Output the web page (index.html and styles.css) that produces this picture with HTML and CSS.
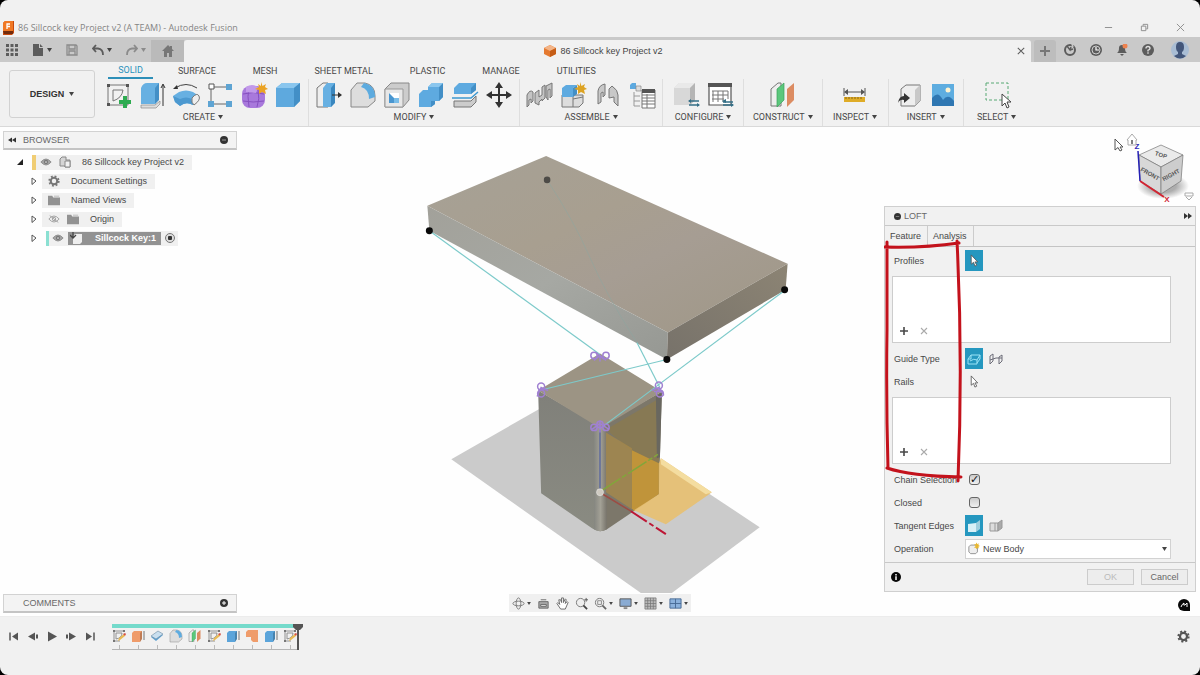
FILE: index.html
```html
<!DOCTYPE html>
<html lang="en">
<head>
<meta charset="utf-8">
<title>86 Sillcock key Project v2 (A TEAM) - Autodesk Fusion</title>
<link rel="stylesheet" href="styles.css">
</head>
<body>
<svg class="sprite" aria-hidden="true">
  <defs>
    <linearGradient id="gTop" x1="0" x2="1" y1="0" y2="1"><stop offset="0" stop-color="#a6a196"/><stop offset="0.4" stop-color="#a89f90"/><stop offset="0.6" stop-color="#a69d93"/><stop offset="1" stop-color="#9f9786"/></linearGradient>
    <linearGradient id="gSide" x1="0" x2="1" y1="0" y2="1"><stop offset="0" stop-color="#a2a19a"/><stop offset="0.5" stop-color="#a6a8a3"/><stop offset="1" stop-color="#969893"/></linearGradient>
    <linearGradient id="gEnd" x1="0" x2="1" y1="1" y2="0"><stop offset="0" stop-color="#77726a"/><stop offset="1" stop-color="#8c8474"/></linearGradient>
    <linearGradient id="gBoxL" x1="0" x2="0" y1="0" y2="1"><stop offset="0" stop-color="#80807a"/><stop offset="1" stop-color="#8a8b82"/></linearGradient>
    <linearGradient id="gRound" x1="0" x2="1" y1="0" y2="0"><stop offset="0" stop-color="#858680"/><stop offset="0.5" stop-color="#a3a196"/><stop offset="1" stop-color="#77736a"/></linearGradient>
    <radialGradient id="gShade"><stop offset="0.5" stop-color="#777" stop-opacity="0.6"/><stop offset="1" stop-color="#777" stop-opacity="0"/></radialGradient>

    <symbol id="caret" viewBox="0 0 5 4"><path d="M0 0H5L2.500 4Z" fill="currentColor"/></symbol>
    <symbol id="cube" viewBox="0 0 28 28"><path d="M2 7 8 2H26V20L20 26H2Z" fill="#5ea9de"/><path d="M2 7 8 2H26L20 7Z" fill="#8ac6ee"/><path d="M20 7 26 2V20L20 26Z" fill="#438fc6"/></symbol>
    <symbol id="sketch" viewBox="0 0 28 28"><g fill="none" stroke="#777"><path d="M4 4H24V24H4Z"/><path d="M9 9H19Q18 17 9 20Z"/></g><path d="M3 3h3v3H3zM22 3h3v3h-3zM3 22h3v3H3z" fill="#555"/><path d="M19 15h4v4h4v4h-4v4h-4v-4h-4v-4h4z" fill="#2eab51"/></symbol>
    <symbol id="extrude" viewBox="0 0 28 28"><path d="M3 24H17L22 20V23L18 27H3Z" fill="#ddd" stroke="#888" stroke-width=".7"/><path d="M3 7Q5 2 9 2H21V18L17 23H3Z" fill="#67b0e2"/><path d="M17 7 21 2V19L17 23Z" fill="#438fc6"/><path d="M25 25V4M23 7l2-4 2 4" stroke="#333" fill="none"/></symbol>
    <symbol id="revolve" viewBox="0 0 28 28"><path d="M3 7Q14 0 25 7" fill="none" stroke="#444"/><path d="M1 8 5 4 6 8Z" fill="#333"/><path d="M1 15 7 11Q14 8 21 11L27 15 21 24Q14 20 8 25L3 21Z" fill="#67b0e2"/><path d="M1 15 8 18Q14 15 20 18L21 24Q14 20 8 25L3 21Z" fill="#4c99d0"/><path d="M20 17Q25 11 27 15T22 24Q19 22 20 17Z" fill="#eee" stroke="#777"/></symbol>
    <symbol id="pattern" viewBox="0 0 28 28"><path d="M6 6H22M5 8V22M8 23H20" stroke="#666" fill="none"/><path d="M3 3h5v5H3z" fill="#fff" stroke="#555"/><path d="M20 3h6v6h-6zM2 20h6v6H2zM20 20h6v6h-6z" fill="#5ea4d3"/></symbol>
    <symbol id="form" viewBox="0 0 28 28"><rect x="2" y="5" width="23" height="22" rx="8" fill="#a879dc"/><path d="M9 6Q7 15 9 26M18 9Q20 18 17 26M3 13Q13 10 24 13M3 20Q13 22 24 20" stroke="#8650bf" fill="none"/><path d="M6 6Q12 2 18 6L16 12 6 11Z" fill="#c29aea"/><path d="M21 1 22.500 5 26 3 25 6 28 8 25 9 26 13 22 11 19 13 19 9 15 8 19 6 18 3 21 5Z" fill="#eba324"/></symbol>
    <symbol id="presspull" viewBox="0 0 28 28"><path d="M2 7 8 2H13V26H2Z" fill="#eee" stroke="#777"/><path d="M8 7 12 2H20V21L16 26H8Z" fill="#67b0e2"/><path d="M16 7 20 2V22L16 26Z" fill="#3a87bf"/><path d="M17 14H26" stroke="#333"/><path d="m23 11 4 3-4 3Z" fill="#333"/></symbol>
    <symbol id="fillet" viewBox="0 0 28 28"><path d="M2 9 8 2H16Q26 4 26 15V20L19 26H2Z" fill="#ddd" stroke="#888"/><path d="M12 6 15 2Q26 4 26 16L20 18Q20 8 12 6Z" fill="#5dabdf"/></symbol>
    <symbol id="shell" viewBox="0 0 28 28"><path d="M2 8 8 2H26V19L20 26H2Z" fill="#ccc" stroke="#888"/><path d="M2 8H20V26H2Z" fill="#e7e7e7" stroke="#999"/><path d="M6 12h10v10H6z" fill="#fff"/><path d="M6 12l5 5v5H6z" fill="#4996d0"/><path d="M11 17h5v5h-5z" fill="#78bce8"/></symbol>
    <symbol id="combine" viewBox="0 0 28 28"><path d="M2 13 6 9H11V6L15 2H26V16L22 20H18V23L14 26H2Z" fill="#5eaae0"/><path d="M22 6 26 2V16L22 20H18V23L14 26V20H22Z" fill="#438fc6"/><path d="M11 6 15 2H26L22 6Z" fill="#8ac6ee"/></symbol>
    <symbol id="split" viewBox="0 0 28 28"><path d="M3 7 8 2H25V9L20 13H3Z" fill="#5eaae0"/><path d="M20 7 25 2V9L20 13Z" fill="#438fc6"/><path d="M3 20H20L25 15V21L20 26H3Z" fill="#ccc" stroke="#777"/><path d="M1 17H20L27 11" stroke="#3d98d0" fill="none" stroke-width="1.500"/></symbol>
    <symbol id="move" viewBox="0 0 28 28"><path d="M14 4V24M4 14H24" stroke="#333" stroke-width="2"/><path d="m14 1 4 6h-8zM14 27l4-6h-8zM1 14l6-4v8zM27 14l-6-4v8z" fill="#333"/></symbol>
    <symbol id="joint" viewBox="0 0 28 28"><g fill="#c4c4c4" stroke="#777"><path d="M1 26V14Q4 8 7 11V20L5 22V18L3 19V24Z"/><path d="M9 22V12L13 9V16L16 14V6L19 4V17L16 20V18L13 21V24Z"/><path d="M20 16V5L26 2V15L24 17V8L22 9V19Z"/></g></symbol>
    <symbol id="newcomp" viewBox="0 0 28 28"><path d="M2 14H23V22L19 26H2Z" fill="#ddd" stroke="#777"/><path d="M13 14V26M13 18 23 16" stroke="#777" fill="none"/><path d="M2 7 6 4H17L13 7V16H2Z" fill="#5eaae0"/><path d="M13 7 17 4V13L13 16Z" fill="#438fc6"/><path d="M20 1 21.500 5 25 3 24 6 27 8 24 9 25 13 21 11 18 13 18 9 14 8 18 6 17 3 20 5Z" fill="#dda323"/></symbol>
    <symbol id="asbuilt" viewBox="0 0 28 28"><path d="M4 23V10Q5 4 11 3V14L9 16V11L7 12V21Z" fill="#c8c8c8" stroke="#777"/><path d="M15 17V8L18 5Q24 9 24 14V25L20 21V16Z" fill="#c8c8c8" stroke="#777"/></symbol>
    <symbol id="bom" viewBox="0 0 28 28"><path d="M2 4 4 2H8V8H2Z" fill="#5eaae0"/><path d="M8 5h5v5H8z" fill="#ddd" stroke="#888" stroke-width=".7"/><path d="M6 11V25M6 15h6M6 20h6M6 25h6" stroke="#999" fill="none"/><path d="M14 9h13v18H14zM14 14h13M14 17h13M14 20h13M14 23h13M19 13v14" stroke="#777" fill="#fff"/><path d="M14 8h13v4H14z" fill="#555"/></symbol>
    <symbol id="config" viewBox="0 0 28 28"><path d="M2 7 7 2H23V19L18 24H2Z" fill="#d8d8d8"/><path d="M2 7 7 2H23L18 7Z" fill="#e9e9e9"/><path d="M18 7 23 2V19L18 24Z" fill="#b5b5b5"/><path d="M17 20H27M17 24H27" stroke="#356f86" stroke-width="1.300"/><path d="m16 20 3-2v4zM28 24l-3-2v4z" fill="#356f86"/></symbol>
    <symbol id="cfgtable" viewBox="0 0 28 28"><path d="M3 4h22v20H3z" fill="#fff" stroke="#555" stroke-width="1.200"/><path d="M2 2h24v4H2z" fill="#555"/><path d="M6 10h16M6 14h16M6 18h12M7 10v11M12 10v11M17 10v11M22 10v8" stroke="#777" fill="none"/><path d="M17 21H27M17 24H27" stroke="#356f86" stroke-width="1.300"/><path d="m16 20 4-2v4zM28 24l-3-2v4z" fill="#356f86"/></symbol>
    <symbol id="planes" viewBox="0 0 28 28"><path d="M2 8 9 2H12V25H2Z" fill="#eee" stroke="#777"/><path d="M8 8 15 2V19L8 26Z" fill="#5bc77c" stroke="#39a15a" stroke-width=".7"/><path d="M18 8 25 2V19L18 26Z" fill="#dc8c62"/></symbol>
    <symbol id="measure" viewBox="0 0 28 28"><path d="M3 7v8M24 7v8M4 11h19" stroke="#555" fill="none"/><path d="m3 11 4-3v6zM24 11l-4-3v6z" fill="#555"/><path d="M3 16h21v5H3z" fill="#dfac27"/><path d="M5 16v2M8 16v2M11 16v2M14 16v2M17 16v2M20 16v2" stroke="#8a6614"/></symbol>
    <symbol id="insert" viewBox="0 0 28 28"><path d="M6 8 11 4H25V20L20 25H6Z" fill="#eee" stroke="#777"/><path d="M20 9 25 4V20L20 25Z" fill="#c8c8c8"/><path d="M3 22Q4 15 9 15V12L15 17 9 22V19Q5 18 3 22Z" fill="#333"/></symbol>
    <symbol id="image" viewBox="0 0 28 28"><path d="M3 3h22v22H3z" fill="#5eade0"/><path d="M3 17Q9 9 14 19 19 12 25 20V25H3Z" fill="#2f77b2"/><circle cx="19" cy="9" r="2.500" fill="#fff3d0"/></symbol>
    <symbol id="select" viewBox="0 0 28 28"><path d="M3 2h22v17H3z" fill="none" stroke="#58a975" stroke-dasharray="3 2"/><path d="M19 13V25l3-3 2 5 2-1-2-5h4z" fill="#fff" stroke="#444"/></symbol>
    <symbol id="cursor" viewBox="0 0 12 14"><path d="M3 1V11L5.500 9 7 13 9 12 7 8.500H10Z" fill="#fff" stroke="#555" stroke-width=".9"/></symbol>
    <symbol id="eye" viewBox="0 0 14 10"><path d="M1 5Q7-2 13 5 7 12 1 5Z" fill="#a4a4a4" stroke="#888"/><circle cx="7" cy="5" r="2.500" fill="#777"/><circle cx="7" cy="5" r="1" fill="#ddd"/></symbol>
    <symbol id="eyeoff" viewBox="0 0 14 10"><path d="M1 5Q7-2 13 5 7 12 1 5ZM2 1 12 9" fill="none" stroke="#999"/><circle cx="7" cy="5" r="2" fill="none" stroke="#999"/></symbol>
    <symbol id="gear" viewBox="0 0 14 14"><circle cx="7" cy="7" r="3.800" fill="none" stroke="currentColor" stroke-width="2.400"/><circle cx="7" cy="7" r="5.600" fill="none" stroke="currentColor" stroke-width="2" stroke-dasharray="2.200 2.200"/></symbol>
    <symbol id="folder" viewBox="0 0 14 12"><path d="M0 1H5L6 3H14V12H0Z" fill="#929292"/><path d="M7 1H13V2H7Z" fill="#aaa"/></symbol>
    <symbol id="plus" viewBox="0 0 10 10"><path d="M5 1V9M1 5H9" stroke="currentColor" stroke-width="1.600"/></symbol>
    <symbol id="cross" viewBox="0 0 10 10"><path d="M2 2 8 8M8 2 2 8" stroke="currentColor" stroke-width="1.100"/></symbol>
    <symbol id="tsketch" viewBox="0 0 14 14"><path d="M2 2H12M2 2V13M2 12H8M4 4h6q0 5-6 6z" fill="none" stroke="#888" stroke-width=".9"/><path d="M1 1h2v2H1zM11 1h2v2h-2zM1 11h2v2H1z" fill="#777"/><path d="m6 12 1-3 5-4 1 2-5 4z" fill="#e9bb54"/><path d="m11 5 2 2 1-2-1-1z" fill="#d65043"/></symbol>
    <symbol id="textrude" viewBox="0 0 14 14"><path d="M1 4 3 2H11V10L9 13H1Z" fill="currentColor"/><path d="M9 4 11 2V10L9 13Z" fill="#000" opacity=".2"/><path d="M13 2V11" stroke="#777"/></symbol>
  </defs>
</svg>

<div class="app">
  <header class="titlebar">
    <svg class="app-logo" viewBox="0 0 12 14"><path d="M1 2 3 0H12V12L10 14H1Z" fill="#c8480c"/><path d="M1 2 3 0H11V10H1Z" fill="#f07824"/><path d="M5 8V3H8M5 5.500H8" stroke="#fff" fill="none" stroke-width="1.300"/><path d="M1 10H11V13H2Z" fill="#722b0c"/></svg>
    <span class="title">86 Sillcock key Project v2 (A TEAM) - Autodesk Fusion</span>
    <div class="window-controls">
      <button aria-label="Minimize"><svg viewBox="0 0 10 10"><path d="M1 5H9" stroke="currentColor"/></svg></button>
      <button aria-label="Restore"><svg viewBox="0 0 10 10"><path d="M1.500 3.500h5v5h-5zM3.500 3V1.500h5v5H7" fill="none" stroke="currentColor"/></svg></button>
      <button aria-label="Close window"><svg viewBox="0 0 10 10"><path d="M1 1 9 9M9 1 1 9" stroke="currentColor"/></svg></button>
    </div>
  </header>

  <div class="quickbar">
    <div class="quick-left">
      <button aria-label="Data panel"><svg class="i12" viewBox="0 0 12 12"><path d="M0 0h3v3H0zM4.500 0h3v3h-3zM9 0h3v3H9zM0 4.500h3v3H0zM4.500 4.500h3v3h-3zM9 4.500h3v3H9zM0 9h3v3H0zM4.500 9h3v3h-3zM9 9h3v3H9z" fill="#5c5c5c"/></svg></button>
      <button aria-label="File"><svg class="i12" viewBox="0 0 12 12"><path d="M1 0H7V4H11V12H1ZM8 0 11 3H8Z" fill="#5c5c5c"/></svg><svg class="caret"><use href="#caret"/></svg></button>
      <button class="dim" aria-label="Save"><svg class="i12" viewBox="0 0 12 12"><path d="M1 1H10L11 2V11H1ZM3 1V5H9V1M3 11V7H9V11" fill="none" stroke="currentColor" stroke-width="1.300"/></svg></button>
      <button aria-label="Undo"><svg class="i12" viewBox="0 0 12 12"><path d="M4 1 1 4.500 4 8M1 4.500H6Q11 5 11 11" fill="none" stroke="currentColor" stroke-width="1.800"/></svg><svg class="caret"><use href="#caret"/></svg></button>
      <button class="dim" aria-label="Redo"><svg class="i12" viewBox="0 0 12 12"><path d="M8 1 11 4.500 8 8M11 4.500H6Q1 5 1 11" fill="none" stroke="currentColor" stroke-width="1.800"/></svg><svg class="caret"><use href="#caret"/></svg></button>
    </div>
    <button class="home-tab" aria-label="Home"><svg class="i12" viewBox="0 0 12 12"><path d="M0 6 6 0 8 2V1h2v3l2 2H10v6H7V8H5v4H2V6Z" fill="#777"/></svg></button>
    <div class="doc-tab">
      <span class="doc-name"><svg class="i12" viewBox="0 0 12 12"><path d="M0 3 6 0 12 3V9L6 12 0 9Z" fill="#e57a30"/><path d="M0 3 6 0 12 3 6 6Z" fill="#f3b487"/><path d="M6 6 12 3V9L6 12Z" fill="#c55d16"/></svg>86 Sillcock key Project v2</span>
      <button class="close-tab" aria-label="Close tab"><svg viewBox="0 0 10 10"><path d="M1 1 9 9M9 1 1 9" stroke="currentColor" stroke-width="1.300"/></svg></button>
    </div>
    <div class="quick-right">
      <button class="new-tab" aria-label="New tab"><svg class="i12" viewBox="0 0 12 12"><path d="M6 1V11M1 6H11" stroke="#777" stroke-width="2"/></svg></button>
      <button aria-label="Extensions"><svg class="i12" viewBox="0 0 12 12"><circle cx="6" cy="6" r="5" fill="none" stroke="currentColor" stroke-width="2"/><path d="M3 2 6 6 7 3M6 6 9 5" fill="none" stroke="currentColor" stroke-width="1.500"/><path d="M8 0 9 3" stroke="#c9c9c9" stroke-width="1.500"/></svg></button>
      <button aria-label="Job status"><svg class="i12" viewBox="0 0 12 12"><circle cx="6" cy="6" r="6" fill="currentColor"/><circle cx="6" cy="6" r="4" fill="none" stroke="#ccc"/><path d="M6 3V6H9" fill="none" stroke="#fff" stroke-width="1.200"/></svg></button>
      <button aria-label="Notifications"><svg class="i12" viewBox="0 0 12 12"><path d="M1 9Q3 8 3 4 3 1 6 1T9 4Q9 8 11 9ZM4 10H8L6 12Z" fill="currentColor"/><circle cx="9" cy="2" r="2.500" fill="#ed824f"/></svg></button>
      <button aria-label="Help"><svg class="i12" viewBox="0 0 12 12"><circle cx="6" cy="6" r="6" fill="currentColor"/><path d="M4 4.500Q4 2.500 6 2.500T8 4.500Q8 5.500 6 6.300V7.500M6 8.300V9.800" fill="none" stroke="#ddd" stroke-width="1.400"/></svg></button>
      <button class="avatar" aria-label="Account"><svg viewBox="0 0 18 18"><circle cx="9" cy="9" r="9" fill="#a9bdd4"/><path d="M9 1Q13 1 13 6 13 10 11 11V13L15 15Q9 20 3 15L7 13V11Q5 10 5 6 5 1 9 1Z" fill="#43567a"/></svg></button>
    </div>
  </div>

  <div class="ribbon">
    <button class="design">DESIGN <svg class="caret"><use href="#caret"/></svg></button>
    <div class="ribbon-main">
      <nav class="ribbon-tabs">
        <button class="active">SOLID</button><button>SURFACE</button><button>MESH</button><button>SHEET METAL</button><button>PLASTIC</button><button>MANAGE</button><button>UTILITIES</button>
      </nav>
      <div class="groups">
        <section class="group">
          <div class="tools"><button aria-label="Create sketch"><svg><use href="#sketch"/></svg></button><button aria-label="Extrude"><svg><use href="#extrude"/></svg></button><button aria-label="Revolve"><svg><use href="#revolve"/></svg></button><button aria-label="Pattern"><svg><use href="#pattern"/></svg></button><button aria-label="Create form"><svg><use href="#form"/></svg></button><button aria-label="Box"><svg><use href="#cube"/></svg></button></div>
          <button class="group-name">CREATE <svg class="caret"><use href="#caret"/></svg></button>
        </section>
        <section class="group">
          <div class="tools"><button aria-label="Press pull"><svg><use href="#presspull"/></svg></button><button aria-label="Fillet"><svg><use href="#fillet"/></svg></button><button aria-label="Shell"><svg><use href="#shell"/></svg></button><button aria-label="Combine"><svg><use href="#combine"/></svg></button><button aria-label="Split body"><svg><use href="#split"/></svg></button><button aria-label="Move"><svg><use href="#move"/></svg></button></div>
          <button class="group-name">MODIFY <svg class="caret"><use href="#caret"/></svg></button>
        </section>
        <section class="group">
          <div class="tools"><button aria-label="Joint"><svg><use href="#joint"/></svg></button><button aria-label="New component"><svg><use href="#newcomp"/></svg></button><button aria-label="As-built joint"><svg><use href="#asbuilt"/></svg></button><button aria-label="Bill of materials"><svg><use href="#bom"/></svg></button></div>
          <button class="group-name">ASSEMBLE <svg class="caret"><use href="#caret"/></svg></button>
        </section>
        <section class="group wide">
          <div class="tools"><button aria-label="Configure model"><svg><use href="#config"/></svg></button><button aria-label="Configuration table"><svg><use href="#cfgtable"/></svg></button></div>
          <button class="group-name">CONFIGURE <svg class="caret"><use href="#caret"/></svg></button>
        </section>
        <section class="group wide">
          <div class="tools"><button aria-label="Offset plane"><svg><use href="#planes"/></svg></button></div>
          <button class="group-name">CONSTRUCT <svg class="caret"><use href="#caret"/></svg></button>
        </section>
        <section class="group wide">
          <div class="tools"><button aria-label="Measure"><svg><use href="#measure"/></svg></button></div>
          <button class="group-name">INSPECT <svg class="caret"><use href="#caret"/></svg></button>
        </section>
        <section class="group">
          <div class="tools"><button aria-label="Insert derive"><svg><use href="#insert"/></svg></button><button aria-label="Canvas"><svg><use href="#image"/></svg></button></div>
          <button class="group-name">INSERT <svg class="caret"><use href="#caret"/></svg></button>
        </section>
        <section class="group">
          <div class="tools"><button aria-label="Select"><svg><use href="#select"/></svg></button></div>
          <button class="group-name">SELECT <svg class="caret"><use href="#caret"/></svg></button>
        </section>
      </div>
    </div>
  </div>

  <main class="viewport">
    <svg class="scene" viewBox="0 127 1200 490" role="img" aria-label="3D model">
      <path d="M451 460 540 409 600 422 760 528 672 594H641Z" fill="#cbcbcb"/>
      <path d="M546 156 788 264 668 333 427 206Z" fill="url(#gTop)"/>
      <path d="M427 206 668 333 667 360 429 231Z" fill="url(#gSide)"/>
      <path d="M668 333 788 264 786 290 667 360Z" fill="url(#gEnd)"/>
      <path d="M538 391 600 427V532Q596 532 592 529L541 494Z" fill="url(#gBoxL)"/>
      <path d="M600 427 662 392 659 495 607 530Q603 532 600 532Z" fill="#7c776a"/>
      <path d="M594 424 600 428 607 424V530Q600 534 594 530Z" fill="url(#gRound)"/>
      <path d="M538 391 600 354 662 392 607 425Q600 429 594 425Z" fill="#9c9484"/>
      <path d="M606 430 661 398 659 465 632 452Z" fill="#8c7a4c" opacity=".7"/>
      <path d="M606 433 632 449V510L606 493Z" fill="#a88a4a" opacity=".75"/>
      <path d="M632 451 659 464V495L634 512 632 509Z" fill="#c0943a"/>
      <path d="M659 464 661 459 712 493 708 496 666 525 634 511 659 495Z" fill="#e8c070" opacity=".9"/>
      <path d="M661 459 712 493 706 495 661 465Z" fill="#f4dda0"/>
      <path d="M656 397 662 393 660 458 657 459Z" fill="#69675f"/>
      <path d="M600 493V430" stroke="#5d6a9c" stroke-width="1.500"/>
      <path d="M602 491 658 455" stroke="#82a63a" stroke-width="1.500" stroke-dasharray="22 2 5 2"/>
      <path d="M603 495 631 512" stroke="#9c4c43" stroke-width="1.500"/>
      <path d="M631 512 666 535" stroke="#bd1635" stroke-width="2" stroke-dasharray="19 3 5 3"/>
      <circle cx="600" cy="493" r="3.500" fill="#cfcac1" stroke="#eee" stroke-width=".5"/>
      <g fill="none" stroke="#7dcaca" stroke-width="1.200"><path d="M429 231 600 355"/><path d="M637 343 660 388"/><path d="M667 360 543 390"/><path d="M786 290 603 427"/></g>
      <path d="M547 180Q575 223 590 258T637 343" fill="none" stroke="#8ba7a0" opacity=".5"/>
      <g fill="none" stroke="#a080d2" stroke-width="1.500">
        <circle cx="594" cy="356" r="3.200"/><circle cx="606" cy="356" r="3.200"/><path d="M594 361 600 356 606 361M600 356V362M596 353 604 360"/>
        <circle cx="541" cy="387" r="3.500"/><circle cx="541" cy="394" r="3.500"/><path d="M537 397 541 388 548 391M538 390H547"/>
        <circle cx="659" cy="386" r="3.500"/><circle cx="660" cy="394" r="3.500"/><path d="M652 391 659 388 664 396M654 392H663"/>
        <circle cx="594" cy="428" r="3.200"/><circle cx="600" cy="425" r="3.200"/><circle cx="606" cy="428" r="3.200"/><path d="M592 430 600 424 609 430M600 421V433"/>
      </g>
      <g fill="#090909"><circle cx="429" cy="231" r="3.500"/><circle cx="785" cy="290" r="3.500"/><circle cx="667" cy="360" r="3.500"/></g>
      <circle cx="547" cy="180" r="3.300" fill="#4d4b47"/>
    </svg>

    <aside class="left-column">
      <section class="browser">
        <h2 class="bar"><svg class="rewind" viewBox="0 0 10 6"><path d="M5 0V6L0 3ZM10 0V6L5 3Z" fill="#333"/></svg><span>BROWSER</span><button aria-label="Hide browser"><svg viewBox="0 0 8 8"><circle cx="4" cy="4" r="4" fill="#333"/><path d="M2 4H6" stroke="#999"/></svg></button></h2>
        <ul class="tree">
          <li class="root"><svg class="twist" viewBox="0 0 8 8"><path d="M7 1V7H1Z" fill="#222"/></svg><div class="node yellow"><svg class="eye"><use href="#eye"/></svg><svg class="i12" viewBox="0 0 12 12"><path d="M1 3 3 1H7V4H11V11H6V10H1Z" fill="#d5d5d5" stroke="#888"/><path d="M6 5H11V11H6Z" fill="#f2f2f2" stroke="#888"/></svg><span>86 Sillcock key Project v2</span></div></li>
          <li><svg class="twist" viewBox="0 0 8 8"><path d="M2 1 6 4 2 7.500Z" fill="none" stroke="#555"/></svg><div class="node"><svg class="i12 grey"><use href="#gear"/></svg><span>Document Settings</span></div></li>
          <li><svg class="twist" viewBox="0 0 8 8"><path d="M2 1 6 4 2 7.500Z" fill="none" stroke="#555"/></svg><div class="node"><svg class="i12"><use href="#folder"/></svg><span>Named Views</span></div></li>
          <li><svg class="twist" viewBox="0 0 8 8"><path d="M2 1 6 4 2 7.500Z" fill="none" stroke="#555"/></svg><div class="node"><svg class="eye"><use href="#eyeoff"/></svg><svg class="i12"><use href="#folder"/></svg><span>Origin</span></div></li>
          <li><svg class="twist" viewBox="0 0 8 8"><path d="M2 1 6 4 2 7.500Z" fill="none" stroke="#555"/></svg><div class="node teal"><svg class="eye"><use href="#eye"/></svg><span class="component"><svg class="i12" viewBox="0 0 12 12"><path d="M3 4 5 2H12V10L10 12H3Z" fill="#eee"/><path d="M3 0V6M0 3 3 6 6 3" stroke="#444" stroke-width="1.300" fill="none"/></svg><b>Sillcock Key:1</b></span><input type="radio" checked aria-label="Activate Sillcock Key:1"></div></li>
        </ul>
      </section>
      <h2 class="bar comments"><span>COMMENTS</span><button aria-label="Add comment"><svg viewBox="0 0 8 8"><circle cx="4" cy="4" r="4" fill="#333"/><path d="M2 4H6M4 2V6" stroke="#fff"/></svg></button></h2>
    </aside>

    <div class="right-column">
      <svg class="viewcube" viewBox="1106 127 90 79">
        <ellipse cx="1163" cy="186" rx="26" ry="13" fill="url(#gShade)"/>
        <path d="M1139 155 1161 145 1183 155 1161 167Z" fill="#eaeaea" stroke="#777" stroke-width=".7"/>
        <path d="M1139 155 1161 167V194L1140 181Z" fill="#d8d8d8" stroke="#777" stroke-width=".7"/>
        <path d="M1161 167 1183 155 1181 181 1161 194Z" fill="#cdcdcd" stroke="#777" stroke-width=".7"/>
        <path d="M1138 151 1140 181" stroke="#2520b5" stroke-width="1.500"/><path d="M1140 181 1164 197" stroke="#d22431" stroke-width="2"/>
        <g class="cube-text"><text x="1161" y="157" transform="rotate(17 1161 155)">TOP</text><text x="1150" y="176" transform="rotate(29 1150 174)">FRONT</text><text x="1171" y="177" transform="rotate(-29 1171 175)">RIGHT</text><text class="axis-z" x="1137" y="149">Z</text><text class="axis-x" x="1167" y="202">X</text></g>
        <path d="M1127 140 1132 134 1137 140H1136V145H1128V140Z" fill="#fff" stroke="#aaa"/><path d="M1132 140V144" stroke="#555" stroke-width="1.500"/>
        <path d="M1115 139V150L1118 147.500 1120 151 1122 150 1120 147H1123Z" fill="#fff" stroke="#555"/>
        <path d="M1185 193H1193V196H1185ZM1186 197 1189 200 1192 197" fill="none" stroke="#aaa"/>
      </svg>

      <form class="loft">
        <h2 class="loft-head"><svg class="dot" viewBox="0 0 8 8"><circle cx="4" cy="4" r="4" fill="#333"/><path d="M2 4H6" stroke="#888"/></svg><span>LOFT</span><svg class="forward" viewBox="0 0 8 6"><path d="M0 0V6L4 3ZM4 0V6L8 3Z" fill="#333"/></svg></h2>
        <div class="loft-tabs"><button type="button" class="current">Feature</button><button type="button">Analysis</button></div>
        <div class="loft-body">
          <div class="row"><span>Profiles</span><button type="button" class="toggle on" aria-label="Select profiles"><svg class="pointer"><use href="#cursor"/></svg></button></div>
          <div class="list"><button type="button" aria-label="Add profile"><svg><use href="#plus"/></svg></button><button type="button" class="faint" aria-label="Remove profile"><svg><use href="#cross"/></svg></button></div>
          <div class="row"><span>Guide Type</span><button type="button" class="toggle on" aria-label="Rails"><svg viewBox="0 0 14 14"><path d="M1 12V7L4 3H13V7L10 11M1 7H4V3M1 12H10V8Q7 6 3 9M10 8 13 3" fill="none" stroke="#9be4f7"/></svg></button><button type="button" class="toggle" aria-label="Centerline"><svg viewBox="0 0 14 14"><path d="M1 12V4L4 2V9ZM10 12V5L13 3V9ZM1 8Q7 5 13 6" fill="none" stroke="#6d6d78"/></svg></button></div>
          <div class="row"><span>Rails</span><button type="button" class="toggle" aria-label="Select rails"><svg class="pointer"><use href="#cursor"/></svg></button></div>
          <div class="list"><button type="button" aria-label="Add rail"><svg><use href="#plus"/></svg></button><button type="button" class="faint" aria-label="Remove rail"><svg><use href="#cross"/></svg></button></div>
          <div class="row"><label for="chain">Chain Selection</label><input id="chain" type="checkbox" checked></div>
          <div class="row"><label for="closed">Closed</label><input id="closed" type="checkbox"></div>
          <div class="row"><span>Tangent Edges</span><button type="button" class="toggle on" aria-label="Merge"><svg viewBox="0 0 14 14"><path d="M1 5 9 4V13H1Z" fill="#d9f0f7"/><path d="M9 4 13 1V10L9 13Z" fill="#9fcede"/></svg></button><button type="button" class="toggle" aria-label="Keep"><svg viewBox="0 0 14 14"><path d="M1 4H9V12H1Z" fill="#ddd" stroke="#999"/><path d="M9 4 13 1V9L9 12Z" fill="#aaa" stroke="#999"/><path d="M6 4V12" stroke="#999"/></svg></button></div>
          <div class="row"><label for="operation">Operation</label><div class="combo"><svg viewBox="0 0 14 14"><path d="M1 5 3 3H11V11L9 13H3L1 11Z" fill="#eee" stroke="#888"/><path d="m10 0 1 2 2-1-1 2 2 1-2 1 1 2-2-1-1 2-1-2-2 0 2-2-2-2h2z" fill="#e8b730"/></svg><select id="operation"><option>New Body</option></select><svg class="caret"><use href="#caret"/></svg></div></div>
        </div>
        <div class="loft-foot"><svg class="info" viewBox="0 0 10 10"><circle cx="5" cy="5" r="5" fill="#080808"/><path d="M5 2V3.500M5 4.300V8" stroke="#fff" stroke-width="1.500"/></svg><button type="button" disabled>OK</button><button type="button">Cancel</button></div>
        <svg class="markup" viewBox="884 206 80 280" fill="none" stroke="#c3121c" stroke-width="3" stroke-linecap="round" stroke-linejoin="round"><path d="M887 242V330Q886 400 888 468M885 247Q925 248 959 243M957 241Q963 360 958 481M887 468Q910 476 961 477"/></svg>
      </form>
      <button class="assistant" aria-label="Assistant"><svg viewBox="0 0 14 14"><path d="M7 1A6 6 0 1 0 7 13H13V7A6 6 0 0 0 7 1Z" fill="#090909"/><path d="M4 9Q5 6 7 5 6 8 8 7L10 5V9" fill="none" stroke="#fff"/></svg></button>
    </div>

    <div class="navbar">
      <button aria-label="Orbit"><svg viewBox="0 0 14 14"><ellipse cx="7" cy="7" rx="6" ry="2.500" fill="none" stroke="#777"/><ellipse cx="7" cy="7" rx="2.500" ry="6" fill="none" stroke="#777"/></svg><svg class="caret"><use href="#caret"/></svg></button>
      <button aria-label="Look at"><svg viewBox="0 0 14 14"><path d="M2 5H12V12H2Z" fill="#aaa" stroke="#666"/><path d="M4 3H10M4 8H10V10H4Z" fill="#eee" stroke="#666"/></svg></button>
      <button aria-label="Pan"><svg viewBox="0 0 14 14"><path d="M5 13 1 7 2 6 4 8 3 3H5L6 6 6 1H8V6L10 2 11 3 10 7 12 5 13 6 10 13Z" fill="#fff" stroke="#666"/></svg></button>
      <button aria-label="Zoom"><svg viewBox="0 0 14 14"><circle cx="6" cy="6" r="4.500" fill="#eee" stroke="#777"/><path d="M9 9 13 13" stroke="#444" stroke-width="2"/><path d="M12 1V5M10 3H14" stroke="#555"/></svg></button>
      <button aria-label="Fit"><svg viewBox="0 0 14 14"><circle cx="6" cy="6" r="4.500" fill="#eee" stroke="#777"/><path d="M9 9 13 13" stroke="#666" stroke-width="2"/><path d="M4 4h4v4H4z" fill="none" stroke="#888"/></svg><svg class="caret"><use href="#caret"/></svg></button>
      <button aria-label="Display settings"><svg viewBox="0 0 14 14"><path d="M1 2H13V10H1Z" fill="#8aabd2" stroke="#555"/><path d="M5 11H9V13H5Z" fill="#888"/></svg><svg class="caret"><use href="#caret"/></svg></button>
      <button aria-label="Grid"><svg viewBox="0 0 14 14"><path d="M1 1H13V13H1Z" fill="#bbb"/><path d="M1 1H13V13H1ZM1 4H13M1 7H13M1 10H13M4 1V13M7 1V13M10 1V13" stroke="#777" stroke-width=".8" fill="none"/></svg><svg class="caret"><use href="#caret"/></svg></button>
      <button aria-label="Viewports"><svg viewBox="0 0 14 14"><path d="M1 2H13V12H1Z" fill="#8bb1dc" stroke="#476a94"/><path d="M7 2V12M1 7H13" stroke="#476a94"/></svg><svg class="caret"><use href="#caret"/></svg></button>
    </div>
  </main>

  <footer class="timeline">
    <div class="playback">
      <button aria-label="Go to start"><svg viewBox="0 0 10 10"><path d="M1 1V9" stroke="currentColor" stroke-width="1.500"/><path d="M9 1V9L3 5Z" fill="currentColor"/></svg></button>
      <button aria-label="Step back"><svg viewBox="0 0 10 10"><path d="M7 1V9L0 5ZM8 3h2v4H8z" fill="currentColor"/></svg></button>
      <button aria-label="Play"><svg viewBox="0 0 10 10"><path d="M1 0V10L10 5Z" fill="currentColor"/></svg></button>
      <button aria-label="Step forward"><svg viewBox="0 0 10 10"><path d="M3 1V9L10 5ZM0 3h2v4H0z" fill="currentColor"/></svg></button>
      <button aria-label="Go to end"><svg viewBox="0 0 10 10"><path d="M9 1V9" stroke="currentColor" stroke-width="1.500"/><path d="M1 1V9L7 5Z" fill="currentColor"/></svg></button>
    </div>
    <div class="track">
      <ol class="features">
        <li><svg><use href="#tsketch"/></svg></li>
        <li class="orange"><svg><use href="#textrude"/></svg></li>
        <li><svg viewBox="0 0 14 14"><path d="M1 8 8 3 13 6 6 12Z" fill="#5c9fd0"/><path d="M1 7 8 2 13 5 6 10Z" fill="#c9dfef" stroke="#6c8ba3" stroke-width=".6"/></svg></li>
        <li><svg><use href="#fillet"/></svg></li>
        <li><svg><use href="#planes"/></svg></li>
        <li><svg><use href="#tsketch"/></svg></li>
        <li class="blue"><svg><use href="#textrude"/></svg></li>
        <li><svg viewBox="0 0 14 14"><path d="M1 3 3 1H13V13H8L6 11V8H1Z" fill="#ef9c6b"/></svg></li>
        <li class="blue"><svg><use href="#textrude"/></svg></li>
        <li><svg><use href="#tsketch"/></svg></li>
      </ol>
      <svg class="marker" viewBox="0 0 10 26"><path d="M0 0H10V3L7 6H6V26H4V6H3L0 3Z" fill="#555"/></svg>
    </div>
    <button class="settings" aria-label="Timeline settings"><svg><use href="#gear"/></svg></button>
  </footer>
</div>
</body>
</html>
```
FILE: styles.css
```css
* { box-sizing: border-box; }
body { margin: 0; background: #000; color: #484848; font: 9px/12px "Liberation Sans", Arial, sans-serif; }
button { margin: 0; padding: 0; border: 0; background: none; color: inherit; font: inherit; display: flex; align-items: center; justify-content: center; }
h2, ul, ol { margin: 0; padding: 0; font: inherit; list-style: none; }
svg { display: block; flex: none; }
.sprite { position: absolute; width: 0; height: 0; }
.caret { width: 5px; height: 4px; color: #444; }
.i12 { width: 12px; height: 12px; }

.app { min-height: 100vh; display: flex; flex-direction: column; background: #f1f1f1; border-radius: 8px; overflow: hidden; }

.titlebar { display: flex; align-items: center; gap: 4px; height: 37px; padding: 18px 15px 0 2px; }
.app-logo { width: 12px; height: 14px; }
.title { flex: 1; color: #858585; font-family: "Open Sans", sans-serif; }
.window-controls { display: flex; gap: 26px; color: #888; }
.window-controls button { width: 10px; height: 10px; }
.window-controls svg { width: 9px; height: 9px; }

.quickbar { display: flex; height: 25px; padding-top: 3px; background: #c9c9c9; color: #5c5c5c; }
.quick-left { display: flex; align-items: center; gap: 14px; width: 151px; padding: 0 0 3px 6px; }
.quick-left button { gap: 3px; }
.quick-left .dim, .quick-left .dim .caret { color: #8b8b8b; }
.home-tab { width: 33px; background: #bababa; }
.doc-tab { flex: 1; display: flex; align-items: center; padding: 0 6px; background: #f1f1f1; border-radius: 3px 3px 0 0; }
.doc-name { flex: 1; display: flex; align-items: center; justify-content: center; gap: 4px; color: #444; }
.close-tab svg { width: 8px; height: 8px; }
.quick-right { display: flex; align-items: center; gap: 14px; padding: 0 11px 3px 3px; }
.quick-right .new-tab { align-self: stretch; width: 22px; margin: 0 -6px -3px 0; background: #bdbdbd; border-radius: 3px 3px 0 0; }
.avatar { margin-left: 3px; }
.avatar svg { width: 18px; height: 18px; }

.ribbon { display: flex; border-bottom: 1px solid #d9d9d9; background: #f1f1f1; }
.design { width: 86px; height: 48px; margin: 8px 3px 8px 9px; gap: 5px; border: 1px solid #d2d2d2; border-radius: 3px; font-weight: bold; color: #333; }
.ribbon-main { flex: 1; }
.ribbon-tabs { display: flex; gap: 23px; padding: 1px 0 0 10px; }
.ribbon-tabs button { height: 16px; padding: 0 7px; font-family: Roboto, sans-serif; }
.ribbon-tabs .active { width: 45px; margin-right: -5px; color: #2a92bc; border-bottom: 2px solid #2d8fb8; }
.groups { display: flex; }
.group { min-width: 66px; padding: 2px 6px 2px; border-right: 1px solid #dedede; }
.group.wide { padding-left: 9px; padding-right: 9px; }
.group:last-child { border: 0; }
.tools { display: flex; justify-content: center; gap: 6px; }
.tools svg { width: 28px; height: 28px; }
.group-name { width: 100%; height: 14px; margin-top: 1px; gap: 3px; font-family: Roboto, sans-serif; white-space: nowrap; }

.viewport { position: relative; flex: 1; display: flex; justify-content: space-between; background: #fefefe; border-bottom: 1px solid #ececec; }
.scene { position: absolute; inset: 0; width: 100%; height: 100%; }
.left-column { position: relative; display: flex; flex-direction: column; justify-content: space-between; width: 237px; padding: 4px 0 3px 3px; }
.bar { display: flex; align-items: center; gap: 7px; height: 19px; padding: 0 8px 0 4px; background: #f3f3f3; border: 1px solid #d2d2d2; border-bottom: 2px solid #c4c4c4; color: #686868; }
.bar span { flex: 1; }
.bar svg { width: 8px; height: 8px; }
.bar.comments { padding-left: 19px; }
.tree { display: grid; gap: 3px; padding: 4px 0 0 27px; }
.tree li { display: flex; align-items: center; gap: 4px; height: 16px; }
.tree .root { margin-left: -14px; gap: 8px; }
.twist { width: 8px; height: 8px; }
.node { display: flex; align-items: center; gap: 7px; height: 15px; padding: 0 8px 0 6px; background: #f0f0f0; }
.node span { margin-left: 4px; }
.node.yellow { border-left: 4px solid #f0cd74; padding-left: 4px; }
.node.teal { border-left: 3px solid #8be0d2; margin-left: 4px; padding: 0 3px 0 3px; gap: 4px; }
.eye { width: 12px; height: 10px; }
.grey { color: #777; }
.node .component { display: flex; align-items: center; gap: 13px; height: 13px; margin: 0; padding: 0 5px 0 2px; background: #929292; color: #fff; }
.node input { appearance: none; width: 10px; height: 10px; margin: 0; border: 1px solid #777; border-radius: 50%; background: radial-gradient(#333 0 35%, #ddd 45%); }

.right-column { position: relative; display: flex; flex-direction: column; align-items: flex-end; width: 316px; padding-right: 4px; }
.viewcube { width: 90px; height: 79px; }
.cube-text { font: bold 6px "Liberation Sans", sans-serif; text-anchor: middle; fill: #555; }
.axis-z { font-size: 8px; fill: #3029b8; }
.axis-x { font-size: 8px; fill: #cf2733; }
.loft { position: relative; width: 100%; background: #f1f1f1; border: 1px solid #cfcfcf; }
.loft-head { display: flex; align-items: center; gap: 3px; height: 19px; padding: 0 3px 0 9px; border-bottom: 1px solid #c9c9c9; color: #686868; }
.loft-head span { flex: 1; }
.dot { width: 7px; height: 7px; }
.forward { width: 8px; height: 6px; }
.loft-tabs { display: flex; height: 21px; border-bottom: 1px solid #c4c4c4; }
.loft-tabs button { padding: 0 6px 0 5px; border-right: 1px solid #ccc; }
.loft-body { padding: 2px 24px 2px 7px; border-bottom: 1px solid #c8c8c8; }
.row { display: flex; align-items: center; height: 23px; padding-left: 2px; }
.row > :first-child { width: 71px; }
.toggle { width: 18px; height: 21px; margin-right: 4px; }
.toggle.on { background: #2597bf; }
.toggle svg { width: 14px; height: 14px; }
.toggle .pointer { width: 12px; height: 13px; }
.list { display: flex; align-items: flex-end; gap: 10px; height: 67px; margin: 4px 0; padding: 0 6px 6px; background: #fff; border: 1px solid #cdcdcd; }
.list svg { width: 10px; height: 10px; }
.faint { color: #aaa; }
.row input { appearance: none; width: 11px; height: 11px; margin: 0 0 0 4px; border: 1px solid #666; border-radius: 3px; background: linear-gradient(#ccc, #f0f0f0); }
.row input:checked::after { content: "✓"; display: block; color: #111; font: bold 11px/9px "DejaVu Sans", sans-serif; }
.combo { flex: 1; display: flex; align-items: center; height: 20px; padding: 0 3px 0 2px; background: #fff; border: 1px solid #d2d2d2; }
.combo > svg:first-child { width: 12px; height: 13px; }
.combo select { appearance: none; flex: 1; height: 18px; padding: 0 3px; border: 0; background: none; color: inherit; font: inherit; }
.loft-foot { display: flex; align-items: center; gap: 7px; height: 28px; padding: 0 7px 0 6px; }
.info { width: 10px; height: 10px; margin-right: auto; }
.loft-foot button { width: 47px; height: 16px; border: 1px solid #ccc; background: #ededed; color: #666; }
.loft-foot button:disabled { color: #bbb; }
.markup { position: absolute; left: -1px; top: -1px; width: 80px; height: 280px; pointer-events: none; }
.assistant { margin: 6px 5px 0 0; }
.assistant svg { width: 14px; height: 14px; }

.navbar { position: absolute; left: 50%; bottom: 4px; transform: translateX(-50%); display: flex; align-items: center; gap: 6px; height: 18px; padding: 0 3px; background: #f0f0f0; }
.navbar button { gap: 2px; }
.navbar button svg:first-child { width: 13px; height: 13px; }
.navbar .caret { width: 4px; height: 3px; }

.timeline { display: flex; align-items: flex-start; height: 58px; padding: 7px 10px 0 9px; color: #555; }
.playback { display: flex; gap: 9px; padding-top: 7px; }
.playback svg { width: 10px; height: 11px; }
.track { position: relative; margin-left: 17px; border-top: 4px solid #74dacb; }
.features { display: flex; gap: 5px; height: 22px; padding: 1px 2px 0 0; border-bottom: 1px solid #b5b5b5; }
.features li { width: 14px; height: 20px; background: linear-gradient(#bbb, #bbb) 50% 100% / 1px 4px no-repeat; }
.features svg { width: 14px; height: 14px; }
.orange { color: #ef9c6b; }
.blue { color: #5ba4da; }
.marker { position: absolute; right: -4px; top: -4px; width: 10px; height: 26px; }
.settings { margin: 6px 0 0 auto; }
.settings svg { width: 13px; height: 13px; }
```
